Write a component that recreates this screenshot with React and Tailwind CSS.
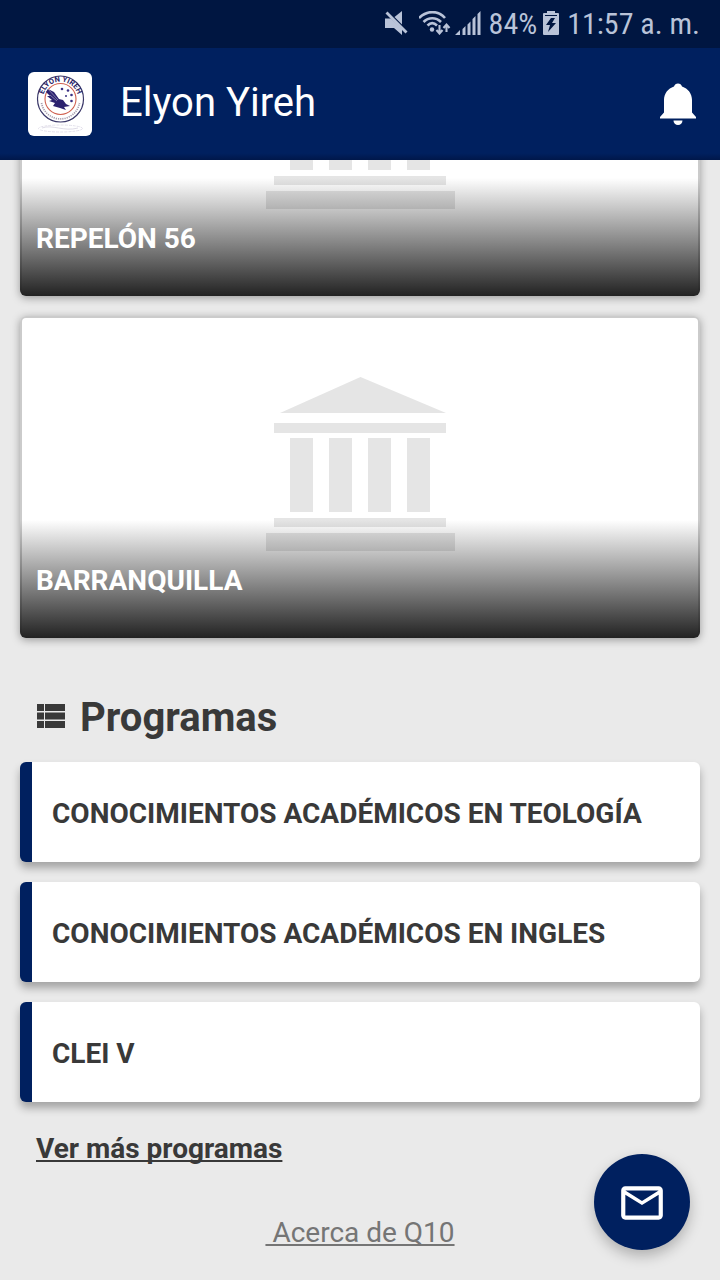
import { MdMailOutline } from 'react-icons/md';

const campuses = ['REPELÓN 56', 'BARRANQUILLA'];

const programs = [
  'CONOCIMIENTOS ACADÉMICOS EN TEOLOGÍA',
  'CONOCIMIENTOS ACADÉMICOS EN INGLES',
  'CLEI V',
];

function MuteIcon() {
  return (
    <svg className="w-6 h-6" viewBox="0 0 24 24" fill="currentColor" aria-hidden="true">
      <path d="M9.500 6L17 0v13.500z" />
      <path d="M0 7.500h6l11 10.500v6l-8-7H0z" />
      <path d="M1.500 1.500l20 20" stroke="currentColor" strokeWidth="2.800" fill="none" />
    </svg>
  );
}

function WifiIcon() {
  return (
    <svg className="w-8 h-6" viewBox="0 0 32 24" fill="none" stroke="currentColor" strokeWidth="2.600" aria-hidden="true">
      <path d="M0 7C8 -.9 19 -.9 26 7" />
      <path d="M4.500 11c5-5 12.500-5 17.500 0" />
      <path d="M8.500 14.500c3-3 6.500-3 9.500 0" />
      <circle cx="13" cy="18.500" r="2.200" fill="currentColor" stroke="none" />
      <path d="M20.500 14v8M17.500 19l3 3.500 3-3.500M27.500 21v-7M24.500 17l3-3.500 3 3.500" strokeWidth="2.100" />
    </svg>
  );
}

function SignalIcon() {
  return (
    <svg className="w-[26px] h-6" viewBox="0 0 26 24" fill="currentColor" aria-hidden="true">
      <path d="M0 24l5-5v5zM7.500 18l3-3V24h-3zM12.500 13.500l3-3V24h-3zM17.500 8l3-3v19h-3zM22.500 3l3-3v24h-3z" />
    </svg>
  );
}

function BatteryIcon() {
  return (
    <svg className="w-4 h-6" viewBox="0 0 16 24" aria-hidden="true">
      <path d="M4 0h8v2h3a1 1 0 0 1 1 1v20a1 1 0 0 1-1 1H1a1 1 0 0 1-1-1V3a1 1 0 0 1 1-1h3z" fill="currentColor" />
      <path d="M2 4.500h12" stroke="#001641" strokeWidth="1" />
      <path d="M8 7L3 14h4l-2 7 8-9H9l3-5z" fill="#001641" />
    </svg>
  );
}

function BellIcon() {
  return (
    <svg className="w-9 h-[42px]" viewBox="0 0 36 42" fill="currentColor" aria-hidden="true">
      <path d="M14 3.500a4.200 4.200 0 0 1 8 0c6 2 10 7 10 13.500v12.500l4 4.500v1.500H0V34l4-4.500V17C4 10.500 8 5.500 14 3.500z" />
      <path d="M13.500 37.500h9a4.500 4.500 0 0 1-9 0z" />
    </svg>
  );
}

function SchoolLogo() {
  return (
    <svg className="w-16 h-16 rounded-md bg-white" viewBox="0 0 64 64" role="img" aria-label="Elyon Yireh">
      <defs>
        <path id="ring-top" d="M15.700 32a17.500 17.500 0 1 1 33.600 0" />
      </defs>
      <circle cx="32.500" cy="27" r="23" fill="none" stroke="#3a3768" strokeWidth="1.200" />
      <circle cx="32.500" cy="27" r="15.500" fill="none" stroke="#d0604f" strokeWidth="1.100" />
      <text fontSize="7.500" fontWeight="700" fill="#2b2468" textAnchor="middle">
        <textPath href="#ring-top" startOffset="50%">ELYON YIREH</textPath>
      </text>
      <path d="M13.500 31a19.300 19.300 0 0 0 38 0" fill="none" stroke="#a79dae" strokeWidth="1.700" strokeDasharray="1.200 1" />
      <path d="M20 17l6 3 5 7 4 1 3 4 4 2-6 1 2 3-6-2-7-2 2-3-6-2 3-1-5-4 3 0-4-4z" fill="#2c226f" />
      <path d="M20 17l10 11M22 23l7 6" stroke="#fff" strokeWidth=".4" />
      <g fill="#3a3083">
        <circle cx="34" cy="17" r="1.300" />
        <circle cx="40" cy="18.500" r="1.300" />
        <circle cx="43.500" cy="23" r="1.300" />
        <circle cx="43.500" cy="29" r="1.300" />
        <circle cx="38" cy="24" r="1" />
      </g>
      <ellipse cx="32.500" cy="56.500" rx="22" ry="3.500" fill="none" stroke="#e3e0eb" strokeDasharray="3 1" />
      <path d="M14 56c10-4 22 4 36 0" fill="none" stroke="#dedbe7" />
    </svg>
  );
}

function BuildingIcon() {
  return (
    <svg className="w-[189px] h-[174px]" viewBox="0 0 189 174" fill="#e5e5e5" aria-hidden="true">
      <path d="M94.500 0L180 36H14z" />
      <rect x="8" y="46" width="172" height="10" />
      <rect x="24" y="61" width="23" height="74" />
      <rect x="63" y="61" width="23" height="74" />
      <rect x="102" y="61" width="23" height="74" />
      <rect x="141" y="61" width="23" height="74" />
      <rect x="8" y="141" width="172" height="9" />
      <rect x="0" y="156" width="189" height="18" />
    </svg>
  );
}

function CampusCard({ name }) {
  return (
    <article className="relative h-[322px] rounded-md overflow-hidden bg-[#cbcbcb] p-0.5">
      <div className="h-full rounded-sm bg-white flex justify-center pt-[59px]">
        <BuildingIcon />
      </div>
      <div className="absolute inset-x-0 bottom-0 h-[118px] px-4 pt-[41px] bg-linear-to-b from-transparent to-[#222222]">
        <h3 className="text-[28px] leading-10 font-bold text-white">{name}</h3>
      </div>
    </article>
  );
}

export default function App() {
  return (
    <div className="min-h-screen bg-[#eaeaea] text-[#393939] font-['Roboto',sans-serif] overflow-hidden">
      {/* Status bar + app bar */}
      <header className="relative z-10 text-white">
        <div className="h-12 bg-[#001641] text-[#b9c3d8] flex items-center justify-end pr-5 pb-0.5">
          <MuteIcon />
          <span className="ml-2.5"><WifiIcon /></span>
          <span className="ml-1"><SignalIcon /></span>
          <span className="ml-2 font-['Roboto_Condensed','Roboto',sans-serif] text-[30px]">84%</span>
          <span className="ml-1.5"><BatteryIcon /></span>
          <span className="ml-2 font-['Roboto_Condensed','Roboto',sans-serif] text-[30px]">11:57 a. m.</span>
        </div>
        <div className="h-28 bg-linear-to-b from-[#00205f] from-94% to-[#00174a] flex items-center pl-7 pr-6">
          <SchoolLogo />
          <h1 className="ml-7 text-[40px] leading-12 pb-0.5">Elyon Yireh</h1>
          <button type="button" aria-label="Notificaciones" className="ml-auto">
            <BellIcon />
          </button>
        </div>
      </header>

      {/* Content is scrolled under the app bar */}
      <main className="-mt-[186px] px-5">
        <section className="flex flex-col gap-5">
          {campuses.map((name) => (
            <div key={name} className="rounded-md shadow-[0_2px_8px_rgba(0,0,0,0.35)]">
              <CampusCard name={name} />
            </div>
          ))}
        </section>

        <section className="pt-14">
          <h2 className="flex items-center gap-3.5 pl-4 text-[40px] leading-12 font-bold">
            <svg className="w-[30px] h-7 pb-1" viewBox="0 0 30 24" fill="currentColor" aria-hidden="true">
              <path d="M1 0h7v7H1zM9 0h20v7H9zM1 8.500h7v7H1zM9 8.500h20v7H9zM1 17h7v7H1zM9 17h20v7H9z" />
            </svg>
            Programas
          </h2>
          <ul className="mt-5 flex flex-col gap-5">
            {programs.map((name) => (
              <li
                key={name}
                className="min-h-[100px] flex items-center pl-5 pr-4 pt-1 bg-white rounded-md border-l-12 border-[#00205f] shadow-[0_6px_8px_rgba(0,0,0,0.3)] text-[28px] font-bold"
              >
                {name}
              </li>
            ))}
          </ul>
          <a href="#programas" className="inline-block mt-[27px] ml-4 text-[28px] leading-10 font-bold underline [text-decoration-skip-ink:none]">
            Ver más programas
          </a>
        </section>
      </main>

      <footer className="mt-11 pb-6 text-center">
        <a href="#acerca" className="text-[28px] leading-10 text-[#757575] underline [text-decoration-skip-ink:none]">&nbsp;Acerca de Q10</a>
      </footer>

      <button
        type="button"
        aria-label="Mensajes"
        className="fixed right-[30px] bottom-[30px] w-24 h-24 rounded-full bg-[#00205f] text-white flex items-center justify-center pt-0.5 shadow-[0_6px_14px_rgba(0,0,0,0.25)]"
      >
        <MdMailOutline size={50} />
      </button>
    </div>
  );
}
